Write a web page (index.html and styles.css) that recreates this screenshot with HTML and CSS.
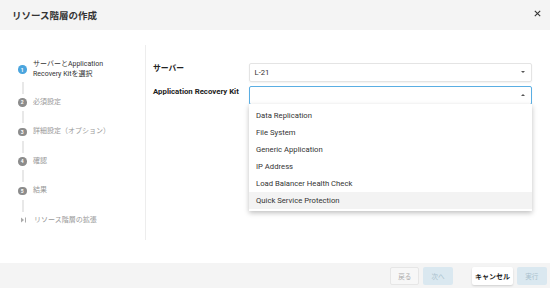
FILE: index.html
```
<!DOCTYPE html>
<html lang="ja">
<head>
    <meta charset="UTF-8">
    <meta name="viewport" content="width=device-width, initial-scale=1.0">
    <title>リソース階層の作成</title>
    <link rel="stylesheet" href="styles.css">
</head>
<body>
    <div class="dialog">
        <!-- ヘッダー -->
        <div class="dialog-header">
            <div class="dialog-title">リソース階層の作成</div>
            <div class="close-button">
                <svg width="7" height="7" viewBox="0 0 7 7">
                    <path d="M0.8 0.8 L6.2 6.2 M6.2 0.8 L0.8 6.2" stroke="#333" stroke-width="1.1" />
                </svg>
            </div>
        </div>

        <div class="dialog-main">
            <!-- ステップ一覧 -->
            <div class="sidebar">
                <div class="step active">
                    <div class="step-num">1</div>
                    <div class="step-label">サーバーとApplication<br>Recovery Kitを選択</div>
                </div>
                <div class="connector"></div>
                <div class="step">
                    <div class="step-num">2</div>
                    <div class="step-label">必須設定</div>
                </div>
                <div class="connector"></div>
                <div class="step">
                    <div class="step-num">3</div>
                    <div class="step-label">詳細設定（オプション）</div>
                </div>
                <div class="connector"></div>
                <div class="step">
                    <div class="step-num">4</div>
                    <div class="step-label">確認</div>
                </div>
                <div class="connector"></div>
                <div class="step">
                    <div class="step-num">5</div>
                    <div class="step-label">結果</div>
                </div>
                <div class="connector"></div>
                <div class="step extend">
                    <div class="step-icon">
                        <svg width="5" height="6" viewBox="0 0 5 6">
                            <path d="M0 0.5 L3 3 L0 5.5 Z" fill="#aaa" />
                            <rect x="4" y="0.5" width="1" height="5" fill="#aaa" />
                        </svg>
                    </div>
                    <div class="step-label">リソース階層の拡張</div>
                </div>
            </div>

            <!-- フォーム -->
            <div class="content">
                <div class="form-row">
                    <div class="field-label">サーバー</div>
                    <div class="select">
                        <span>L-21</span>
                        <span class="arrow down"></span>
                    </div>
                </div>
                <div class="form-row">
                    <div class="field-label">Application Recovery Kit</div>
                    <div class="select open">
                        <span></span>
                        <span class="arrow up"></span>
                        <div class="dropdown">
                            <div class="option">Data Replication</div>
                            <div class="option">File System</div>
                            <div class="option">Generic Application</div>
                            <div class="option">IP Address</div>
                            <div class="option">Load Balancer Health Check</div>
                            <div class="option hover">Quick Service Protection</div>
                        </div>
                    </div>
                </div>
            </div>
        </div>

        <!-- フッター -->
        <div class="dialog-footer">
            <button class="btn btn-back">戻る</button>
            <button class="btn btn-next">次へ</button>
            <button class="btn btn-cancel">キャンセル</button>
            <button class="btn btn-run">実行</button>
        </div>
    </div>
</body>
</html>
```

FILE: styles.css
```
body {
    margin: 0;
    font-family: Roboto, "Noto Sans CJK JP", sans-serif;
    color: #333;
    background-color: #fff;
}

.dialog {
    width: 550px;
    height: 288px;
    display: flex;
    flex-direction: column;
    overflow: hidden;
}

.dialog-header {
    height: 30px;
    flex-shrink: 0;
    background-color: #f4f4f4;
    padding: 0 9px 0 12px;
    display: flex;
    align-items: center;
    justify-content: space-between;
}

.dialog-title {
    font-size: 9.5px;
    font-weight: 700;
    color: #333;
}

.close-button {
    width: 7px;
    height: 7px;
    display: flex;
    margin-top: -3px;
}

.dialog-main {
    flex: 1;
    display: flex;
    padding-top: 15px;
}

/* 左側のステップ */
.sidebar {
    width: 146px;
    flex-shrink: 0;
    box-sizing: border-box;
    border-right: 1px solid #ededed;
    margin-bottom: 23px;
    padding: 15px 0 0 18px;
}

.step {
    display: flex;
    align-items: center;
    gap: 6.5px;
}

.step-num {
    width: 8.5px;
    height: 8.5px;
    border-radius: 50%;
    background-color: #8c8c8c;
    color: #fff;
    font-size: 5px;
    font-weight: 700;
    display: flex;
    align-items: center;
    justify-content: center;
    flex-shrink: 0;
}

.step-label {
    font-size: 7px;
    line-height: 9.5px;
    color: #999;
}

.step.active .step-num {
    background-color: #4ba5de;
}

.step.active .step-label {
    color: #333;
}

.step-icon {
    width: 8.5px;
    display: flex;
    justify-content: center;
    padding-left: 1px;
}

.connector {
    width: 2px;
    height: 12px;
    margin: 4px 0 4px 3.5px;
    background-color: #e8e8e8;
}

.step.active + .connector {
    margin-top: 2.5px;
}

/* 右側のフォーム */
.content {
    flex: 1;
    padding: 18px 18.5px 0 7px;
}

.form-row {
    display: flex;
    align-items: flex-start;
    margin-bottom: 4.5px;
}

.field-label {
    width: 96px;
    flex-shrink: 0;
    font-size: 7.8px;
    line-height: 10px;
    font-weight: 700;
    color: #222;
    padding-top: 1px;
}

.select {
    flex: 1;
    position: relative;
    height: 18.5px;
    box-sizing: border-box;
    border: 1px solid #e4e4e4;
    border-radius: 2px;
    box-shadow: 0 1px 2px rgba(0, 0, 0, 0.06);
    padding: 0 6px 0 4.5px;
    display: flex;
    align-items: center;
    justify-content: space-between;
    font-size: 7.7px;
    color: #333;
}

.select.open {
    border-color: #5aaee3;
}

.arrow {
    width: 0;
    height: 0;
    border-left: 2.5px solid transparent;
    border-right: 2.5px solid transparent;
}

.arrow.down {
    border-top: 2.5px solid #555;
}

.arrow.up {
    border-bottom: 2.5px solid #555;
}

.dropdown {
    position: absolute;
    top: 100%;
    left: -1px;
    right: -1.5px;
    margin-top: 0.5px;
    background-color: #fff;
    box-shadow: 0 2px 5px rgba(0, 0, 0, 0.25);
    padding: 3px 0 2px;
    z-index: 10;
}

.option {
    height: 17px;
    line-height: 17px;
    padding: 0 7px;
    font-size: 7.7px;
    color: #333;
}

.option.hover {
    background-color: #f3f3f3;
}

/* フッター */
.dialog-footer {
    height: 25px;
    flex-shrink: 0;
    background-color: #f4f4f4;
    display: flex;
    align-items: center;
    justify-content: flex-end;
    padding-right: 3.3px;
}

.btn {
    height: 18px;
    padding: 0;
    border: none;
    border-radius: 2px;
    font-family: Roboto, "Noto Sans CJK JP", sans-serif;
    font-size: 6.5px;
    margin-top: 1px;
}

.btn-back {
    width: 29px;
    background-color: #f7f7f7;
    border: 1px solid #e6e6e6;
    color: #aaa;
}

.btn-next {
    width: 29.5px;
    margin-left: 4px;
    background-color: #dae8f0;
    color: #a8bfcc;
}

.btn-cancel {
    width: 41.5px;
    margin-left: 19px;
    background-color: #fff;
    box-shadow: 0 1px 2px rgba(0, 0, 0, 0.15);
    font-size: 7px;
    font-weight: 700;
    color: #222;
}

.btn-run {
    width: 30px;
    margin-left: 3.4px;
    background-color: #dae8f0;
    color: #a8bfcc;
}
```
